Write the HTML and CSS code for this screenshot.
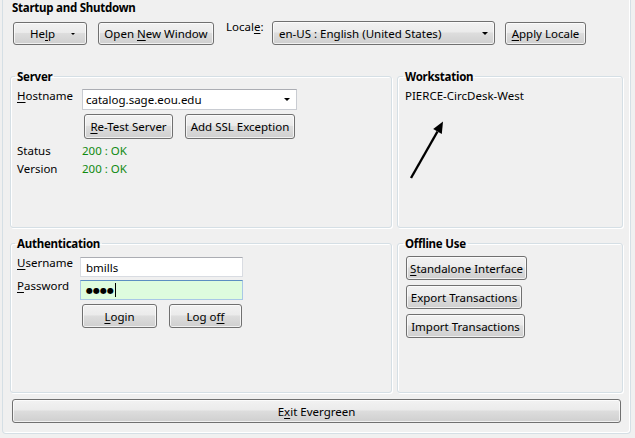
FILE: index.html
```html
<!DOCTYPE html>
<html>
<head>
<meta charset="utf-8">
<link rel="stylesheet" href="styles.css">
</head>
<body>
<div class="frame">
  <div class="frame-title">Startup and Shutdown</div>
  <div class="toolbar">
    <button class="btn btn-help"><span>He<u>l</u>p</span><span class="tri-sm"></span></button>
    <button class="btn btn-newwin">Open <u>N</u>ew Window</button>
    <span class="lbl locale-lbl">Local<u>e</u>:</span>
    <div class="select"><span>en-US : English (United States)</span><span class="tri"></span></div>
    <button class="btn btn-apply"><u>A</u>pply Locale</button>
  </div>

  <div class="groups">
    <fieldset class="group server">
      <legend>Server</legend>
      <div class="form-row">
        <label class="lbl lbl-host"><u>H</u>ostname</label>
        <div class="combo"><span>catalog.sage.eou.edu</span><span class="tri"></span></div>
      </div>
      <div class="btn-row server-btns">
        <button class="btn btn-retest"><u>R</u>e-Test Server</button>
        <button class="btn btn-ssl">Add SSL Exception</button>
      </div>
      <div class="info first"><span class="info-lbl">Status</span><span class="ok">200 : OK</span></div>
      <div class="info"><span class="info-lbl">Version</span><span class="ok">200 : OK</span></div>
    </fieldset>

    <fieldset class="group right workstation">
      <legend>Workstation</legend>
      <div class="ws-name">PIERCE-CircDesk-West</div>
      <svg class="arrow" width="50" height="70" viewBox="0 0 50 70">
        <line x1="6" y1="63" x2="32.5" y2="16.5" stroke="#000" stroke-width="2.4"/>
        <polygon points="38,6.5 36.8,19 28.2,14" fill="#000"/>
      </svg>
    </fieldset>

    <fieldset class="group auth">
      <legend>Authentication</legend>
      <div class="form-row">
        <label class="lbl lbl-auth"><u>U</u>sername</label>
        <div class="input">bmills</div>
      </div>
      <div class="form-row pw-row">
        <label class="lbl lbl-auth"><u>P</u>assword</label>
        <div class="input focus"><span class="dots">●●●●</span><span class="caret"></span></div>
      </div>
      <div class="btn-row auth-btns">
        <button class="btn btn-login"><u>L</u>ogin</button>
        <button class="btn btn-logoff">Log o<u>f</u>f</button>
      </div>
    </fieldset>

    <fieldset class="group right offline">
      <legend>Offline Use</legend>
      <div class="offline-list">
        <button class="btn btn-standalone"><u>S</u>tandalone Interface</button>
        <button class="btn btn-export">Export Transactions</button>
        <button class="btn btn-import">Import Transactions</button>
      </div>
    </fieldset>
  </div>

  <button class="btn btn-exit">E<u>x</u>it Evergreen</button>
</div>
</body>
</html>
```

FILE: styles.css
```css
* { box-sizing: border-box; }
html, body { margin: 0; padding: 0; }
body {
  width: 635px;
  height: 438px;
  overflow: hidden;
  background: #f0f0f0;
  font-family: "Noto Sans", "Open Sans", "DejaVu Sans", sans-serif;
  font-size: 11.5px;
  color: #000;
}
u { text-decoration: underline; text-decoration-thickness: 1px; text-underline-offset: 2px; }

.frame {
  margin-left: 2px;
  width: 629px;
  height: 434px;
  border: 1px solid #d5dfe5;
  border-top: 0;
  border-radius: 0 0 4px 4px;
  box-shadow: inset -1px -1px 0 #fff;
  padding: 0 7px;
  display: flex;
  flex-direction: column;
}
.frame-title { font-weight: bold; line-height: 16px; margin-left: 2px; letter-spacing: -0.25px; }

.btn {
  height: 23px;
  margin: 0;
  padding: 0;
  border: 1px solid #707070;
  border-radius: 3px;
  background: linear-gradient(#f2f2f2 0%, #ebebeb 45%, #dddddd 50%, #cfcfcf 100%);
  box-shadow: inset 0 0 0 1px rgba(255,255,255,0.7);
  font: inherit;
  color: #000;
  line-height: 15px;
  white-space: nowrap;
  text-align: center;
}

.toolbar { display: flex; align-items: flex-start; margin-top: 6px; height: 23px; }
.btn-help {
  width: 74px; margin-left: 3px; padding-left: 16px;
  display: flex; align-items: center; justify-content: flex-start;
}
.tri-sm {
  margin-left: auto; margin-right: 11px;
  width: 0; height: 0;
  border-left: 2px solid transparent; border-right: 2px solid transparent;
  border-top: 2px solid #000;
}
.btn-newwin { width: 116px; margin-left: 11px; }
.lbl { line-height: 15px; white-space: nowrap; }
.locale-lbl { width: 46px; margin-left: 12px; margin-top: -3px; }
.select {
  width: 223px; height: 24px; margin-top: -1px;
  border: 1px solid #707070; border-radius: 3px;
  background: linear-gradient(#f2f2f2 0%, #ebebeb 45%, #dddddd 50%, #cfcfcf 100%);
  box-shadow: inset 0 0 0 1px rgba(255,255,255,0.7);
  display: flex; align-items: center; padding-left: 6px; padding-top: 1px;
}
.tri {
  margin-left: auto; margin-right: 6px;
  width: 0; height: 0;
  border-left: 3px solid transparent; border-right: 3px solid transparent;
  border-top: 3px solid #000;
}
.btn-apply { width: 81px; margin-left: 10px; }

.groups {
  margin-top: 24px;
  display: grid;
  grid-template-columns: 382px 226px;
  grid-template-rows: 159px 157px;
  column-gap: 5px;
  row-gap: 8px;
}
.group {
  margin: 0;
  min-width: 0;
  border: 1px solid #d5dfe5;
  border-radius: 3px;
  box-shadow: inset 1px 1px 0 #fff, 1px 1px 0 #fff;
  padding: 5px 6px 0 6px;
}
.group.right { padding-left: 7px; }
.group legend { font-weight: bold; line-height: 15px; padding: 0 2px; margin-left: -2px; letter-spacing: -0.25px; }
.group.auth { padding-top: 6px; }
.group.workstation { padding-top: 4px; }

.form-row { display: flex; align-items: flex-start; }
.lbl-host { width: 65px; margin-top: -1px; }
.combo {
  width: 215px; height: 21px;
  background: #fff;
  border: 1px solid #c9ccd2; border-top-color: #abadb3;
  display: flex; align-items: center; padding-left: 3px;
}
.btn-row { display: flex; gap: 12px; }
.server-btns { margin-top: 4px; padding-left: 67px; }
.btn-retest { width: 89px; height: 25px; }
.btn-ssl { width: 110px; height: 25px; }
.info { display: flex; line-height: 18px; }
.info.first { margin-top: 3px; }
.info-lbl { width: 65px; }
.ok { color: #108a10; }

.ws-name { line-height: 15px; }
.arrow { display: block; margin-top: 12px; }

.lbl-auth { width: 63px; margin-top: -2px; }
.input {
  width: 163px; height: 20px;
  background: #fff;
  border: 1px solid #d9dce2; border-top-color: #abadb3;
  display: flex; align-items: center; padding-left: 5px;
}
.pw-row { margin-top: 3px; }
.input.focus { background: #defcde; border-color: #a9c8e6; border-top-color: #5c8fc2; }
.dots { font-size: 8px; letter-spacing: 0px; line-height: 10px; }
.caret { width: 1px; height: 14px; background: #000; margin-left: 1px; }
.auth-btns { margin-top: 4px; padding-left: 65px; }
.btn-login { width: 75px; height: 24px; }
.btn-logoff { width: 73px; height: 24px; }

.offline-list { display: flex; flex-direction: column; align-items: flex-start; gap: 5px; padding-left: 1px; }
.btn-standalone { width: 121px; height: 24px; }
.btn-export { width: 116px; height: 24px; }
.btn-import { width: 119px; height: 24px; }

.btn-exit { margin: 6px 2px 0 2px; height: 24px; }
```
